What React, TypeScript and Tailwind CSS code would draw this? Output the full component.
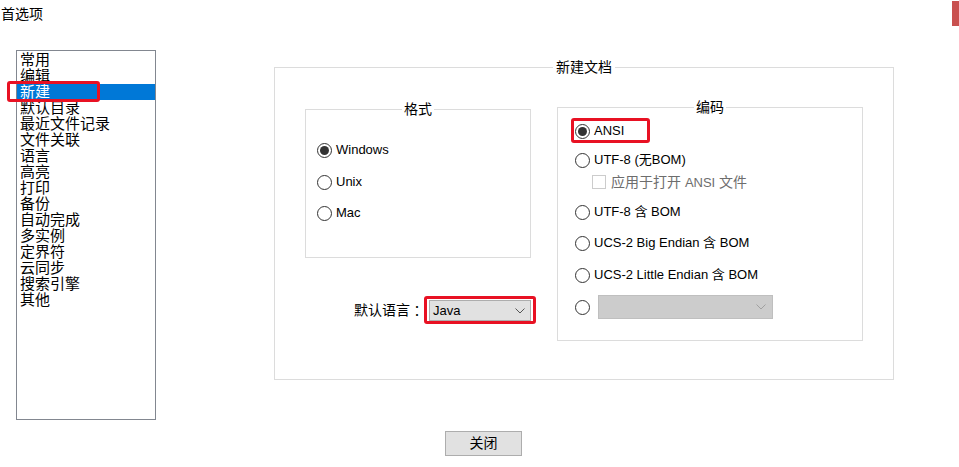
import React from "react";

const pages = [
  "常用",
  "编辑",
  "新建",
  "默认目录",
  "最近文件记录",
  "文件关联",
  "语言",
  "高亮",
  "打印",
  "备份",
  "自动完成",
  "多实例",
  "定界符",
  "云同步",
  "搜索引擎",
  "其他",
];

function Radio({ checked = false, label }: { checked?: boolean; label?: string }) {
  return (
    <div className="flex h-[20px] items-center gap-[4px]">
      <span className="flex h-[15px] w-[15px] items-center justify-center rounded-full border border-[#333] bg-white">
        {checked && <span className="h-[9px] w-[9px] rounded-full bg-[#333]" />}
      </span>
      {label && <span className="text-[13px] leading-[20px] text-black">{label}</span>}
    </div>
  );
}

function Chevron({ color }: { color: string }) {
  return (
    <svg width="10" height="6" viewBox="0 0 10 6" fill="none">
      <path d="M0.5 0.5 L5 5 L9.5 0.5" stroke={color} strokeWidth="1" />
    </svg>
  );
}

// 红色标注框
function Mark({ className }: { className: string }) {
  return <span className={`pointer-events-none absolute rounded-[3px] border-[3px] border-[#e81123] ${className}`} />;
}

export default function App() {
  return (
    <div className="relative h-[467px] w-[959px] overflow-hidden bg-white text-black [font-family:'Liberation_Sans','Noto_Sans_CJK_SC',sans-serif]">
      <div className="h-[50px] pl-[1px] pt-[5px] text-[14px] leading-[18px]">首选项</div>

      <div className="flex">
        {/* 左侧列表 */}
        <div className="relative ml-[16px] h-[370px] w-[140px] border border-[#828790] pt-[1px]">
          {pages.map((p, i) => (
            <div
              key={p}
              className={
                i === 2
                  ? "h-[16px] bg-[#0078d7] pl-[3px] text-[15px] leading-[16px] text-white"
                  : "h-[16px] pl-[3px] text-[15px] leading-[16px]"
              }
            >
              {p}
            </div>
          ))}
          <Mark className="left-[-10px] top-[30px] h-[21px] w-[93px]" />
        </div>

        {/* 新建文档 */}
        <fieldset className="ml-[118px] mt-[9px] h-[321px] w-[620px] border border-[#dcdcdc]">
          <legend className="mx-auto px-[3px] text-[14px] leading-[16px]">新建文档</legend>
          <div className="flex gap-[26px] pl-[30px]">
            <div className="mt-[26px] w-[226px]">
              <fieldset className="h-[157px] border border-[#dcdcdc]">
                <legend className="mx-auto px-[2px] text-[14px] leading-[16px]">格式</legend>
                <div className="pl-[11px]">
                  <div className="mt-[23px]">
                    <Radio checked label="Windows" />
                  </div>
                  <div className="mt-[12px]">
                    <Radio label="Unix" />
                  </div>
                  <div className="mt-[11px]">
                    <Radio label="Mac" />
                  </div>
                </div>
              </fieldset>

              <div className="mt-[42px] flex items-center justify-end">
                <span className="text-[14px] leading-[21px]">默认语言</span>
                <span className="mr-[5px] w-[14px] text-center text-[14px] leading-[21px] [font-family:'Noto_Sans_CJK_JP',sans-serif]">
                  ：
                </span>
                <div className="relative flex h-[21px] w-[102px] items-center justify-between border border-[#adadad] bg-[#e1e1e1] pl-[3px] pr-[5px]">
                  <span className="text-[13px] leading-[19px]">Java</span>
                  <Chevron color="#555" />
                  <Mark className="-bottom-[4px] -left-[6px] -right-[6px] -top-[5px]" />
                </div>
              </div>
            </div>

            <fieldset className="mt-[24px] h-[242px] w-[306px] border border-[#dcdcdc]">
              <legend className="mx-auto px-[2px] text-[14px] leading-[16px]">编码</legend>
              <div className="pl-[17px]">
                <div className="relative mt-[6px]">
                  <Radio checked label="ANSI" />
                  <Mark className="left-[-4px] top-[-3px] h-[25px] w-[79px]" />
                </div>
                <div className="mt-[9px]">
                  <Radio label="UTF-8 (无BOM)" />
                </div>
                <div className="mt-[4px] flex h-[16px] items-center gap-[5px] pl-[17px]">
                  <span className="h-[14px] w-[14px] border border-[#cccccc] bg-white" />
                  <span className="text-[14px] leading-[16px] text-[#6d6d6d]">
                    应用于打开 <span className="text-[13px]">ANSI</span> 文件
                  </span>
                </div>
                <div className="mt-[12px]">
                  <Radio label="UTF-8 含 BOM" />
                </div>
                <div className="mt-[11px]">
                  <Radio label="UCS-2 Big Endian 含 BOM" />
                </div>
                <div className="mt-[12px]">
                  <Radio label="UCS-2 Little Endian 含 BOM" />
                </div>
                <div className="mt-[10px] flex h-[24px] items-center gap-[8px]">
                  <Radio />
                  <div className="flex h-[24px] w-[175px] items-center justify-end border border-[#bfbfbf] bg-[#cccccc] pr-[6px]">
                    <Chevron color="#a0a0a0" />
                  </div>
                </div>
              </div>
            </fieldset>
          </div>
        </fieldset>
      </div>

      <button className="ml-[445px] mt-[11px] h-[25px] w-[77px] border border-[#adadad] bg-[#e1e1e1] text-[14px] leading-[23px]">
        关闭
      </button>

      <span className="absolute right-0 top-[1px] h-[25px] w-[7px] bg-[#c9504f]" />
    </div>
  );
}
